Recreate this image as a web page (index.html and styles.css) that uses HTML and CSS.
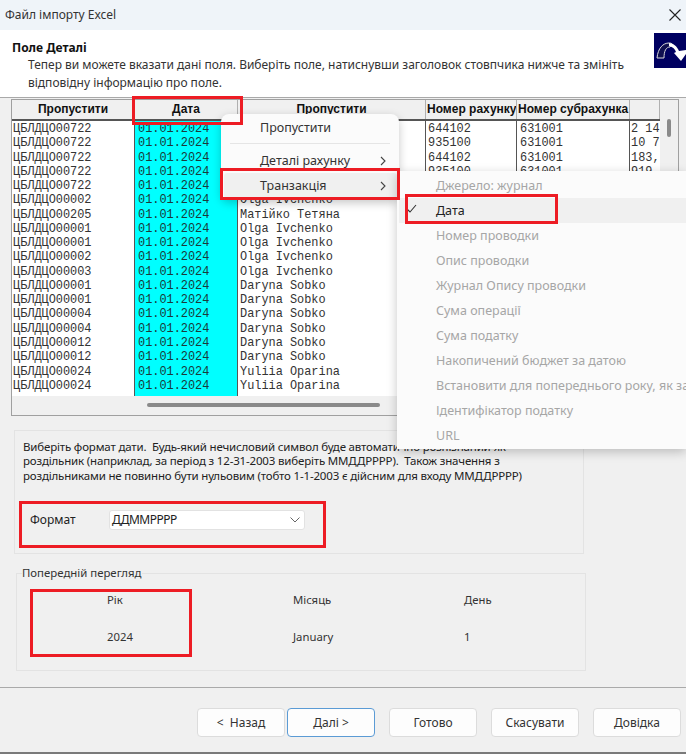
FILE: index.html
```html
<!DOCTYPE html>
<html lang="uk">
<head>
<meta charset="utf-8">
<title>Файл імпорту Excel</title>
<link rel="stylesheet" href="styles.css">
</head>
<body>
<div class="window">
  <div class="titlebar">
    <span class="title">Файл імпорту Excel</span>
    <svg class="close" width="12" height="12" viewBox="0 0 12 12"><path d="M.5.5l11 11M11.5.5l-11 11" stroke="#222" stroke-width="1.1" fill="none"/></svg>
  </div>
  <div class="header">
    <div class="header-text">
      <div class="header-title">Поле Деталі</div>
      <div class="header-desc">Тепер ви можете вказати дані поля. Виберіть поле, натиснувши заголовок стовпчика нижче та змініть відповідну інформацію про поле.</div>
    </div>
    <svg class="logo" width="32" height="35" viewBox="0 0 32 35">
      <rect width="32" height="35" fill="#000060"/>
      <path d="M3 25C4 15 9 10 15 10c1 0 2 0 3 1l-2 3c-4 0-6 4-6 11z" fill="#101050" stroke="#d8d8d8" stroke-width="1"/>
      <path d="M15 10c4 0 8 3 10 8l7-1v4l-5 7-7-8 2-1c-1-3-3-5-7-6z" fill="#fff"/>
    </svg>
  </div>
  <div class="content">
    <div class="grid-panel">
      <div class="grid">
        <div class="grid-head">
          <div class="hcell c1">Пропустити</div>
          <div class="hcell c2">Дата</div>
          <div class="hcell c3">Пропустити</div>
          <div class="hcell c4">Номер рахунку</div>
          <div class="hcell c5">Номер субрахунка</div>
          <div class="hcell c6"></div>
        </div>
        <div class="grid-body">
          <div class="col c1">ЦБЛДЦО00722<br>ЦБЛДЦО00722<br>ЦБЛДЦО00722<br>ЦБЛДЦО00722<br>ЦБЛДЦО00722<br>ЦБЛДЦО00002<br>ЦБЛДЦО00205<br>ЦБЛДЦО00001<br>ЦБЛДЦО00001<br>ЦБЛДЦО00002<br>ЦБЛДЦО00003<br>ЦБЛДЦО00001<br>ЦБЛДЦО00001<br>ЦБЛДЦО00004<br>ЦБЛДЦО00004<br>ЦБЛДЦО00012<br>ЦБЛДЦО00012<br>ЦБЛДЦО00024<br>ЦБЛДЦО00024</div>
          <div class="col c2 selected">01.01.2024<br>01.01.2024<br>01.01.2024<br>01.01.2024<br>01.01.2024<br>01.01.2024<br>01.01.2024<br>01.01.2024<br>01.01.2024<br>01.01.2024<br>01.01.2024<br>01.01.2024<br>01.01.2024<br>01.01.2024<br>01.01.2024<br>01.01.2024<br>01.01.2024<br>01.01.2024<br>01.01.2024</div>
          <div class="col c3"><br><br><br><br><br>Olga Ivchenko<br>Матійко Тетяна<br>Olga Ivchenko<br>Olga Ivchenko<br>Olga Ivchenko<br>Olga Ivchenko<br>Daryna Sobko<br>Daryna Sobko<br>Daryna Sobko<br>Daryna Sobko<br>Daryna Sobko<br>Daryna Sobko<br>Yuliia Oparina<br>Yuliia Oparina</div>
          <div class="col c4">644102<br>935100<br>644102<br>935100</div>
          <div class="col c5">631001<br>631001<br>631001<br>631001</div>
          <div class="col c6">2 14<br>10 7<br>183,<br>919</div>
        </div>
        <div class="hscroll"><div class="hthumb"></div></div>
        <div class="vscroll"><div class="vthumb"></div></div>
      </div>
    </div>

    <div class="format-box">
      <p class="format-note">Виберіть формат дати.&nbsp; Будь-який нечисловий символ буде автоматично розпізнаний як<br>роздільник (наприклад, за період з 12-31-2003 виберіть ММДДРРРР).&nbsp; Також значення з<br>роздільниками не повинно бути нульовим (тобто 1-1-2003 є дійсним для входу ММДДРРРР)</p>
      <div class="format-row">
        <span class="format-label">Формат</span>
        <div class="select">
          <span>ДДММРРРР</span>
          <svg width="10" height="6" viewBox="0 0 10 6"><path d="M.5.5L5 5 9.500.5" stroke="#666" fill="none"/></svg>
        </div>
      </div>
    </div>

    <div class="preview">
      <span class="preview-legend">Попередній перегляд</span>
      <div class="preview-grid">
        <span>Рік</span><span>Місяць</span><span>День</span>
        <span>2024</span><span>January</span><span>1</span>
      </div>
    </div>
  </div>
  <div class="footer">
    <button class="btn">&lt;&nbsp; Назад</button>
    <button class="btn btn-default">Далі &gt;</button>
    <button class="btn btn-gap">Готово</button>
    <button class="btn btn-gap">Скасувати</button>
    <button class="btn btn-gap">Довідка</button>
  </div>
</div>

<div class="menu menu-main">
  <div class="mi">Пропустити</div>
  <div class="sep"></div>
  <div class="mi mi-sub">Деталі рахунку<svg width="6" height="10" viewBox="0 0 6 10"><path d="M1 1l4 4-4 4" stroke="#444" stroke-width="1.100" fill="none"/></svg></div>
  <div class="mi mi-sub mi-hover">Транзакція<svg width="6" height="10" viewBox="0 0 6 10"><path d="M1 1l4 4-4 4" stroke="#444" stroke-width="1.100" fill="none"/></svg></div>
</div>
<div class="menu menu-sub">
  <div class="si dis">Джерело: журнал</div>
  <div class="si si-on"><svg class="check" width="11" height="9" viewBox="0 0 11 9"><path d="M1 5l3 3 6-7" stroke="#333" stroke-width="1.100" fill="none"/></svg>Дата</div>
  <div class="si dis">Номер проводки</div>
  <div class="si dis">Опис проводки</div>
  <div class="si dis">Журнал Опису проводки</div>
  <div class="si dis">Сума операції</div>
  <div class="si dis">Сума податку</div>
  <div class="si dis">Накопичений бюджет за датою</div>
  <div class="si dis">Встановити для попереднього року, як зазначено</div>
  <div class="si dis">Ідентифікатор податку</div>
  <div class="si dis">URL</div>
</div>

<div class="mark mark-date"></div>
<div class="mark mark-trans"></div>
<div class="mark mark-subdate"></div>
<div class="mark mark-format"></div>
<div class="mark mark-year"></div>
</body>
</html>
```
FILE: styles.css
```css
* { box-sizing: border-box; }
html, body { margin: 0; padding: 0; }
body {
  width: 686px;
  height: 755px;
  overflow: hidden;
  position: relative;
  background: #fff;
  font-family: "Noto Sans", "Open Sans", sans-serif;
  color: #222;
}
.window {
  width: 686px;
  height: 754px;
  display: flex;
  flex-direction: column;
  background: #f0f0f0;
  border-bottom: 2px solid #7a7a7a;
}
.titlebar {
  height: 30px;
  flex: none;
  background: #eff4f9;
  display: flex;
  align-items: center;
  justify-content: space-between;
  padding: 0 5px 1px 5px;
  font-size: 12px;
}
.title { color: #333; }
.header {
  height: 68px;
  flex: none;
  background: #fff;
  display: flex;
  justify-content: space-between;
  border-bottom: 1px solid #a9a9a9;
  padding: 3px 0 0 12px;
}
.header-title { font-size: 12px; font-weight: 700; color: #111; line-height: 18px; margin-top: 6px; }
.header-desc { font-size: 12px; line-height: 18px; width: 630px; margin-top: -1px; padding-left: 16px; color: #333; letter-spacing: -.01px; }
.logo { flex: none; }
.content { flex: 1; display: flex; flex-direction: column; padding: 1px 0 0 11px; border-bottom: 1px solid #aaa; }
.grid-panel { width: 668px; height: 317px; flex: none; }
.grid {
  position: relative;
  height: 100%;
  border: 1px solid #a0a0a0;
  background: #f0f0f0;
  overflow: hidden;
}
.grid-head { display: flex; height: 21px; width: 648px; background: #f0f0f0; border-bottom: 2px solid #555; }
.hcell {
  font: 700 12px/19px "Liberation Sans", sans-serif;
  text-align: center;
  color: #111;
  border-right: 1px solid #b0b0b0;
  white-space: nowrap;
  overflow: hidden;
}
.c1 { width: 123px; flex: none; }
.c2 { width: 103px; flex: none; }
.c3 { width: 188px; flex: none; }
.c4 { width: 91px; flex: none; }
.c5 { width: 113px; flex: none; }
.c6 { width: 30px; flex: none; }
.hcell.c4, .hcell.c5 { text-align: left; padding-left: 1px; }
.grid-body { display: flex; height: 275px; background: #fff; width: 648px; }
.col {
  font: 11.9px/14.27px "Liberation Mono", monospace;
  color: #333;
  padding: 1px 0 0 2px;
  white-space: nowrap;
  overflow: hidden;
  border-right: 1px solid #555;
}
.col.c1 { padding-left: 1px; }
.col.c6 { border-right: 0; padding-left: 1px; }
.col.c5 { padding-left: 3px; }
.selected { background: #00ffff; padding-left: 3px; color: #1b3a3a; }
.hscroll { height: 19px; background: #f0f0f0; position: relative; }
.hthumb { position: absolute; left: 135px; width: 233px; top: 7px; height: 4px; background: #8a8a8a; border-radius: 2px; }
.vscroll { position: absolute; right: 0; top: 0; width: 18px; height: 296px; background: #f0f0f0; }
.vthumb { position: absolute; left: 7px; top: 19px; width: 4px; height: 18px; background: #8a8a8a; border-radius: 2px; }

.format-box {
  width: 570px;
  height: 124px;
  margin: 14px 0 0 3px;
  border: 1px solid #e3e3e3;
  padding: 9px 8px 0;
  flex: none;
}
.format-note { margin: 0; font: 11.5px/14.3px "Noto Sans", sans-serif; color: #222; white-space: nowrap; letter-spacing: -.17px; }
.format-row { display: flex; align-items: center; margin: 27px 0 0 7px; }
.format-label { width: 79px; font-size: 12px; color: #222; }
.select {
  width: 196px;
  height: 20px;
  background: #fff;
  border: 1px solid #e2e2e2;
  border-radius: 3px;
  padding: 0 4px 0 2px;
  display: flex;
  align-items: center;
  justify-content: space-between;
  font: 12px "Noto Sans", sans-serif;
  letter-spacing: -.5px;
  color: #222;
}
.preview {
  position: relative;
  width: 570px;
  height: 98px;
  margin: 19px 0 0 5px;
  border: 1px solid #e3e3e3;
  flex: none;
}
.preview-legend { position: absolute; left: 5px; top: -9px; background: #f0f0f0; font-size: 11.4px; line-height: 16px; padding-right: 1px; color: #333; }
.preview-grid {
  display: grid;
  grid-template-columns: 186px 171px auto;
  grid-auto-rows: 37px;
  padding: 7px 0 0 90px;
  font-size: 11.3px;
  line-height: 37px;
  color: #333;
}
.footer {
  height: 64px;
  flex: none;
  display: flex;
  padding: 20px 0 0 197px;
  gap: 2px;
}
.btn {
  width: 88px;
  height: 29px;
  background: #fdfdfd;
  border: 1px solid #dcdcdc;
  border-radius: 4px;
  font: 12px "Noto Sans", sans-serif;
  color: #333;
  padding: 0;
}
.btn-default { border: 1px solid #5b9bd5; }
.btn-gap { margin-left: 12px; }

.menu {
  position: absolute;
  background: #fbfbfb;
  box-shadow: 0 3px 10px rgba(0,0,0,.22);
  font-size: 12.5px;
  color: #333;
}
.menu-main {
  left: 221px;
  top: 114px;
  width: 178px;
  height: 86px;
  border-radius: 8px;
  padding-top: 1px;
}
.mi { height: 25px; line-height: 25px; padding: 0 13px 0 39px; display: flex; align-items: center; justify-content: space-between; }
.sep { height: 1px; background: #e5e5e5; margin: 3px 9px 4px 9px; }
.mi-hover { background: #f0f0f0; margin: 0 2px 0 3px; padding: 0 11px 0 36px; border-radius: 3px; }
.menu-sub {
  left: 397px;
  top: 171px;
  width: 289px;
  height: 278px;
  padding-top: 2px;
  overflow: hidden;
  white-space: nowrap;
}
.si { height: 25px; line-height: 25px; padding-left: 39px; position: relative; }
.dis { color: #a6a6a6; }
.si-on { background: #f0f0f0; color: #222; margin-left: 2px; padding-left: 37px; }
.check { position: absolute; left: 7px; top: 6px; }
.mark { position: absolute; border: 3px solid #ed1c24; }
.mark-date { left: 132px; top: 96px; width: 111px; height: 29px; }
.mark-trans { left: 220px; top: 168px; width: 180px; height: 32px; }
.mark-subdate { left: 405px; top: 194px; width: 153px; height: 30px; }
.mark-format { left: 19px; top: 501px; width: 307px; height: 47px; }
.mark-year { left: 30px; top: 589px; width: 162px; height: 68px; }
```
